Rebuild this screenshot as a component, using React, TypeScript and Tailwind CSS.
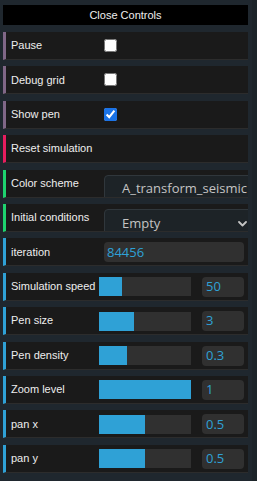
import React from "react";

const LABEL_FONT = { fontFamily: '"Liberation Sans", Arial, sans-serif' };
const VALUE_FONT = { fontFamily: '"Open Sans", "Liberation Sans", sans-serif' };

function Row({
  color,
  label,
  children,
}: {
  color: string;
  label: string;
  children?: React.ReactNode;
}) {
  return (
    <div
      className={`relative flex h-[28px] items-center overflow-hidden border-b border-b-[#2c2c2c] border-l-[3px] bg-[#1a1a1a] ${color}`}
    >
      <div
        className="w-[98px] shrink-0 whitespace-nowrap pl-[5px] text-[11px] text-[#eeeeee]"
        style={LABEL_FONT}
      >
        {label}
      </div>
      {children}
    </div>
  );
}

function Check({ checked }: { checked?: boolean }) {
  return (
    <input
      type="checkbox"
      defaultChecked={checked}
      className="m-0 h-[13px] w-[13px] accent-[#1a73e8]"
    />
  );
}

function NumberRow({ label, pct, value }: { label: string; pct: number; value: string }) {
  return (
    <Row color="border-l-[#2fa1d6]" label={label}>
      <div className="ml-[-5px] mt-[1px] h-[19px] w-[92px] shrink-0 bg-[#303030]">
        <div className="h-full bg-[#2fa1d6]" style={{ width: `${pct}%` }} />
      </div>
      <div
        className="ml-[11px] mt-[1px] flex h-[20px] w-[42px] shrink-0 items-center rounded-[4px] bg-[#303030] pl-[4px] text-[13px] text-[#2fa1d6]"
        style={VALUE_FONT}
      >
        {value}
      </div>
    </Row>
  );
}

export default function App() {
  return (
    <div className="relative h-[481px] w-[257px] overflow-hidden bg-[#1f272e]">
      <div className="absolute right-0 top-0 h-full w-[5px] bg-[#1c2429]" />
      <div className="w-[248px] pl-[3px] pt-[5px]">
        <div
          className="flex h-[20px] items-center justify-center bg-black text-[11px] text-[#eeeeee]"
          style={LABEL_FONT}
        >
          Close Controls
        </div>
        <div className="mt-[7px] flex flex-col gap-[6.4px]">
          <Row color="border-l-[#806787]" label="Pause">
            <Check />
          </Row>
          <Row color="border-l-[#806787]" label="Debug grid">
            <Check />
          </Row>
          <Row color="border-l-[#806787]" label="Show pen">
            <Check checked />
          </Row>
          <Row color="border-l-[#e61d5f]" label="Reset simulation" />
          <Row color="border-l-[#1ed36f]" label="Color scheme">
            <div
              className="mt-[5px] flex h-[29px] w-[200px] shrink-0 items-center self-start whitespace-nowrap rounded-[4px] border border-[#30373c] bg-[#1d2327] pl-[17px] text-[13px] text-[#c4c4c4]"
              style={VALUE_FONT}
            >
              A_transform_seismic
            </div>
          </Row>
          <Row color="border-l-[#1ed36f]" label="Initial conditions">
            <div
              className="relative mt-[5px] flex h-[29px] w-[150px] shrink-0 items-center self-start rounded-[4px] border border-[#30373c] bg-[#1d2327] pl-[17px] text-[13px] text-[#c4c4c4]"
              style={VALUE_FONT}
            >
              Empty
              <svg
                className="absolute right-[6px] top-[11px]"
                width="9"
                height="6"
                viewBox="0 0 9 6"
                fill="none"
              >
                <polyline
                  points="1,1 4.5,4.5 8,1"
                  stroke="#c4c4c4"
                  strokeWidth="1.8"
                  strokeLinecap="round"
                  strokeLinejoin="round"
                />
              </svg>
            </div>
          </Row>
          <Row color="border-l-[#2fa1d6]" label="iteration">
            <div
              className="mt-[1px] flex h-[20px] w-[140px] shrink-0 items-center rounded-[4px] bg-[#303030] pl-[3px] text-[13px] text-[#2fa1d6]"
              style={VALUE_FONT}
            >
              84456
            </div>
          </Row>
          <NumberRow label="Simulation speed" pct={25} value="50" />
          <NumberRow label="Pen size" pct={38} value="3" />
          <NumberRow label="Pen density" pct={30} value="0.3" />
          <NumberRow label="Zoom level" pct={100} value="1" />
          <NumberRow label="pan x" pct={50} value="0.5" />
          <NumberRow label="pan y" pct={50} value="0.5" />
        </div>
      </div>
    </div>
  );
}
